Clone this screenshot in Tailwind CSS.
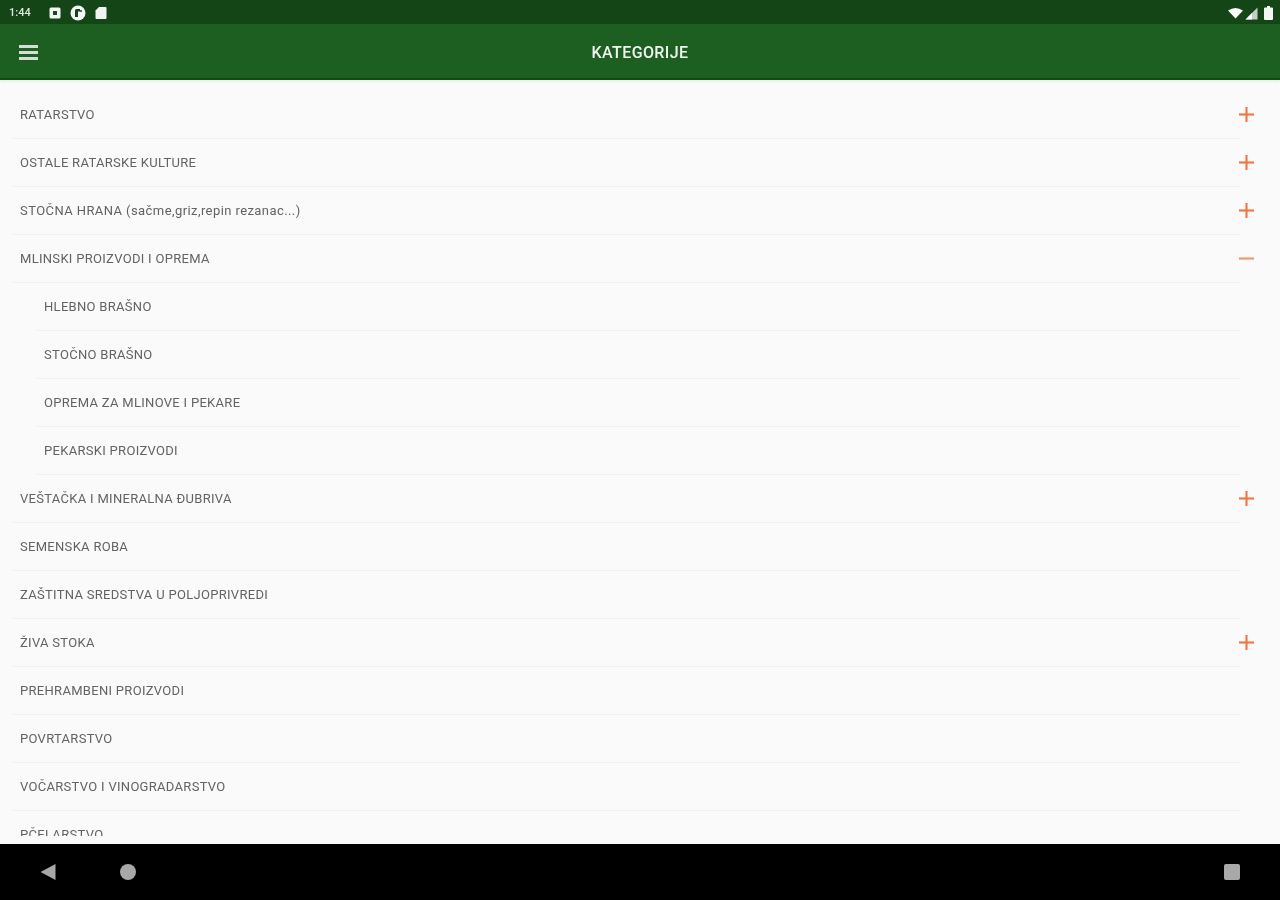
<!DOCTYPE html>
<html><head><meta charset="utf-8"><script src="https://cdn.jsdelivr.net/npm/@tailwindcss/browser@4"></script></head>
<body class="m-0">
<div class="w-[1280px] h-[900px] flex flex-col overflow-hidden bg-[#fafafa] font-['Roboto',sans-serif]">
  <div class="h-6 shrink-0 bg-[#144517] flex items-center justify-between pl-[9px] pr-[7px] pt-[2px] text-white">
    <div class="flex items-center blur-[0.5px]">
      <span class="text-[11px] font-medium text-[#dfe6df] w-[28px]">1:44</span>
      <svg class="ml-[11px]" width="14" height="14" viewBox="0 0 14 14"><rect x="1.500" y="1.500" width="11" height="11" rx="1.500" fill="#f4f6f4"/><rect x="5" y="5" width="4" height="4" fill="#1a4a1d"/></svg>
      <svg class="ml-[8px]" width="16" height="16" viewBox="0 0 16 16"><circle cx="8" cy="8" r="7.500" fill="#f4f6f4"/><path d="M5 12V5.500Q5 4 6.500 4H10V6.500H8V12Z" fill="#16431a"/><circle cx="11" cy="6" r="1" fill="#16431a"/></svg>
      <svg class="ml-[9px]" width="12" height="14" viewBox="0 0 12 14"><path d="M4 1H10.500Q11.500 1 11.500 2V12Q11.500 13 10.500 13H1.500Q.5 13 .5 12V4.500Z" fill="#f0f3f0"/></svg>
    </div>
    <div class="flex items-center gap-[2px] blur-[0.5px]">
      <svg width="15" height="12" viewBox="0 0 15 12"><path d="M0 3.500Q7.500 -1.500 15 3.500L7.500 11.500Z" fill="#fff"/></svg>
      <svg width="13" height="13" viewBox="0 0 13 13"><path d="M12.500 .5V12.500H.5Z" fill="#c5d0c5"/><path d="M7 6V12.500H.5Z" fill="#fff"/></svg>
      <svg class="ml-[4px]" width="9" height="14" viewBox="0 0 9 14"><path d="M3 0H6V1.500H8Q9 1.500 9 2.500V13Q9 14 8 14H1Q0 14 0 13V2.500Q0 1.500 1 1.500H3Z" fill="#f4f6f4"/></svg>
    </div>
  </div>
  <div class="h-14 shrink-0 bg-[#1c5f21] border-b-2 border-[#0f4d12] flex items-center relative z-10 shadow-[0_2px_2px_rgba(0,0,0,0.05)]">
    <svg class="absolute left-[19px] top-[21px] blur-[0.5px]" width="19" height="15" viewBox="0 0 19 15"><path d="M0 0H19V3H0ZM0 6H19V9H0ZM0 12H19V15H0Z" fill="#d5ded5"/></svg>
    <div class="w-full text-center text-[16px] font-medium text-[#f2f5f2] pt-[3px] tracking-[0.4px] blur-[0.4px]">KATEGORIJE</div>
  </div>
  <div class="flex-1 min-h-0">
  <div class="h-[756px] overflow-hidden pt-[11px] text-[13px] text-[#636363] tracking-[0.3px]">
   <div class="blur-[0.6px]">
    <div class="h-12 ml-3 mr-10 pl-2 border-b border-[#f1f1f1] flex items-center relative">RATARSTVO<svg class="absolute right-[-14px] top-[16px]" width="15" height="15" viewBox="0 0 15 15"><path d="M6.500 0H8.500V6.500H15V8.500H8.500V15H6.500V8.500H0V6.500H6.500Z" fill="#f76f35"/></svg></div>
    <div class="h-12 ml-3 mr-10 pl-2 border-b border-[#f1f1f1] flex items-center relative">OSTALE RATARSKE KULTURE<svg class="absolute right-[-14px] top-[16px]" width="15" height="15" viewBox="0 0 15 15"><path d="M6.500 0H8.500V6.500H15V8.500H8.500V15H6.500V8.500H0V6.500H6.500Z" fill="#f76f35"/></svg></div>
    <div class="h-12 ml-3 mr-10 pl-2 border-b border-[#f1f1f1] flex items-center relative tracking-[0.42px]">STOČNA HRANA (sačme,griz,repin rezanac...)<svg class="absolute right-[-14px] top-[16px]" width="15" height="15" viewBox="0 0 15 15"><path d="M6.500 0H8.500V6.500H15V8.500H8.500V15H6.500V8.500H0V6.500H6.500Z" fill="#f76f35"/></svg></div>
    <div class="h-12 ml-3 mr-10 pl-2 border-b border-[#f1f1f1] flex items-center relative">MLINSKI PROIZVODI I OPREMA<svg class="absolute right-[-14px] top-[16px]" width="15" height="15" viewBox="0 0 15 15"><path d="M0 6.500H15V8.500H0Z" fill="#f7905f"/></svg></div>
    <div class="h-12 ml-9 mr-10 pl-2 border-b border-[#f1f1f1] flex items-center">HLEBNO BRAŠNO</div>
    <div class="h-12 ml-9 mr-10 pl-2 border-b border-[#f1f1f1] flex items-center">STOČNO BRAŠNO</div>
    <div class="h-12 ml-9 mr-10 pl-2 border-b border-[#f1f1f1] flex items-center">OPREMA ZA MLINOVE I PEKARE</div>
    <div class="h-12 ml-9 mr-10 pl-2 border-b border-[#f1f1f1] flex items-center">PEKARSKI PROIZVODI</div>
    <div class="h-12 ml-3 mr-10 pl-2 border-b border-[#f1f1f1] flex items-center relative">VEŠTAČKA I MINERALNA ĐUBRIVA<svg class="absolute right-[-14px] top-[16px]" width="15" height="15" viewBox="0 0 15 15"><path d="M6.500 0H8.500V6.500H15V8.500H8.500V15H6.500V8.500H0V6.500H6.500Z" fill="#f76f35"/></svg></div>
    <div class="h-12 ml-3 mr-10 pl-2 border-b border-[#f1f1f1] flex items-center">SEMENSKA ROBA</div>
    <div class="h-12 ml-3 mr-10 pl-2 border-b border-[#f1f1f1] flex items-center">ZAŠTITNA SREDSTVA U POLJOPRIVREDI</div>
    <div class="h-12 ml-3 mr-10 pl-2 border-b border-[#f1f1f1] flex items-center relative">ŽIVA STOKA<svg class="absolute right-[-14px] top-[16px]" width="15" height="15" viewBox="0 0 15 15"><path d="M6.500 0H8.500V6.500H15V8.500H8.500V15H6.500V8.500H0V6.500H6.500Z" fill="#f76f35"/></svg></div>
    <div class="h-12 ml-3 mr-10 pl-2 border-b border-[#f1f1f1] flex items-center">PREHRAMBENI PROIZVODI</div>
    <div class="h-12 ml-3 mr-10 pl-2 border-b border-[#f1f1f1] flex items-center">POVRTARSTVO</div>
    <div class="h-12 ml-3 mr-10 pl-2 border-b border-[#f1f1f1] flex items-center">VOČARSTVO I VINOGRADARSTVO</div>
    <div class="h-12 ml-3 mr-10 pl-2 border-b border-[#f1f1f1] flex items-center">PČELARSTVO</div>
   </div>
  </div>
  </div>
  <div class="h-14 shrink-0 bg-black relative">
    <svg class="absolute left-[40px] top-[20px] blur-[0.5px]" width="16" height="16" viewBox="0 0 16 16"><path d="M15.500 0V16L.5 8Z" fill="#a8a8a8"/></svg>
    <div class="absolute left-[120px] top-[20px] w-4 h-4 rounded-full bg-[#a8a8a8] blur-[0.5px]"></div>
    <div class="absolute left-[1224px] top-[20px] w-4 h-4 rounded-[2px] bg-[#a8a8a8] blur-[0.5px]"></div>
  </div>
</div>
</body></html>
